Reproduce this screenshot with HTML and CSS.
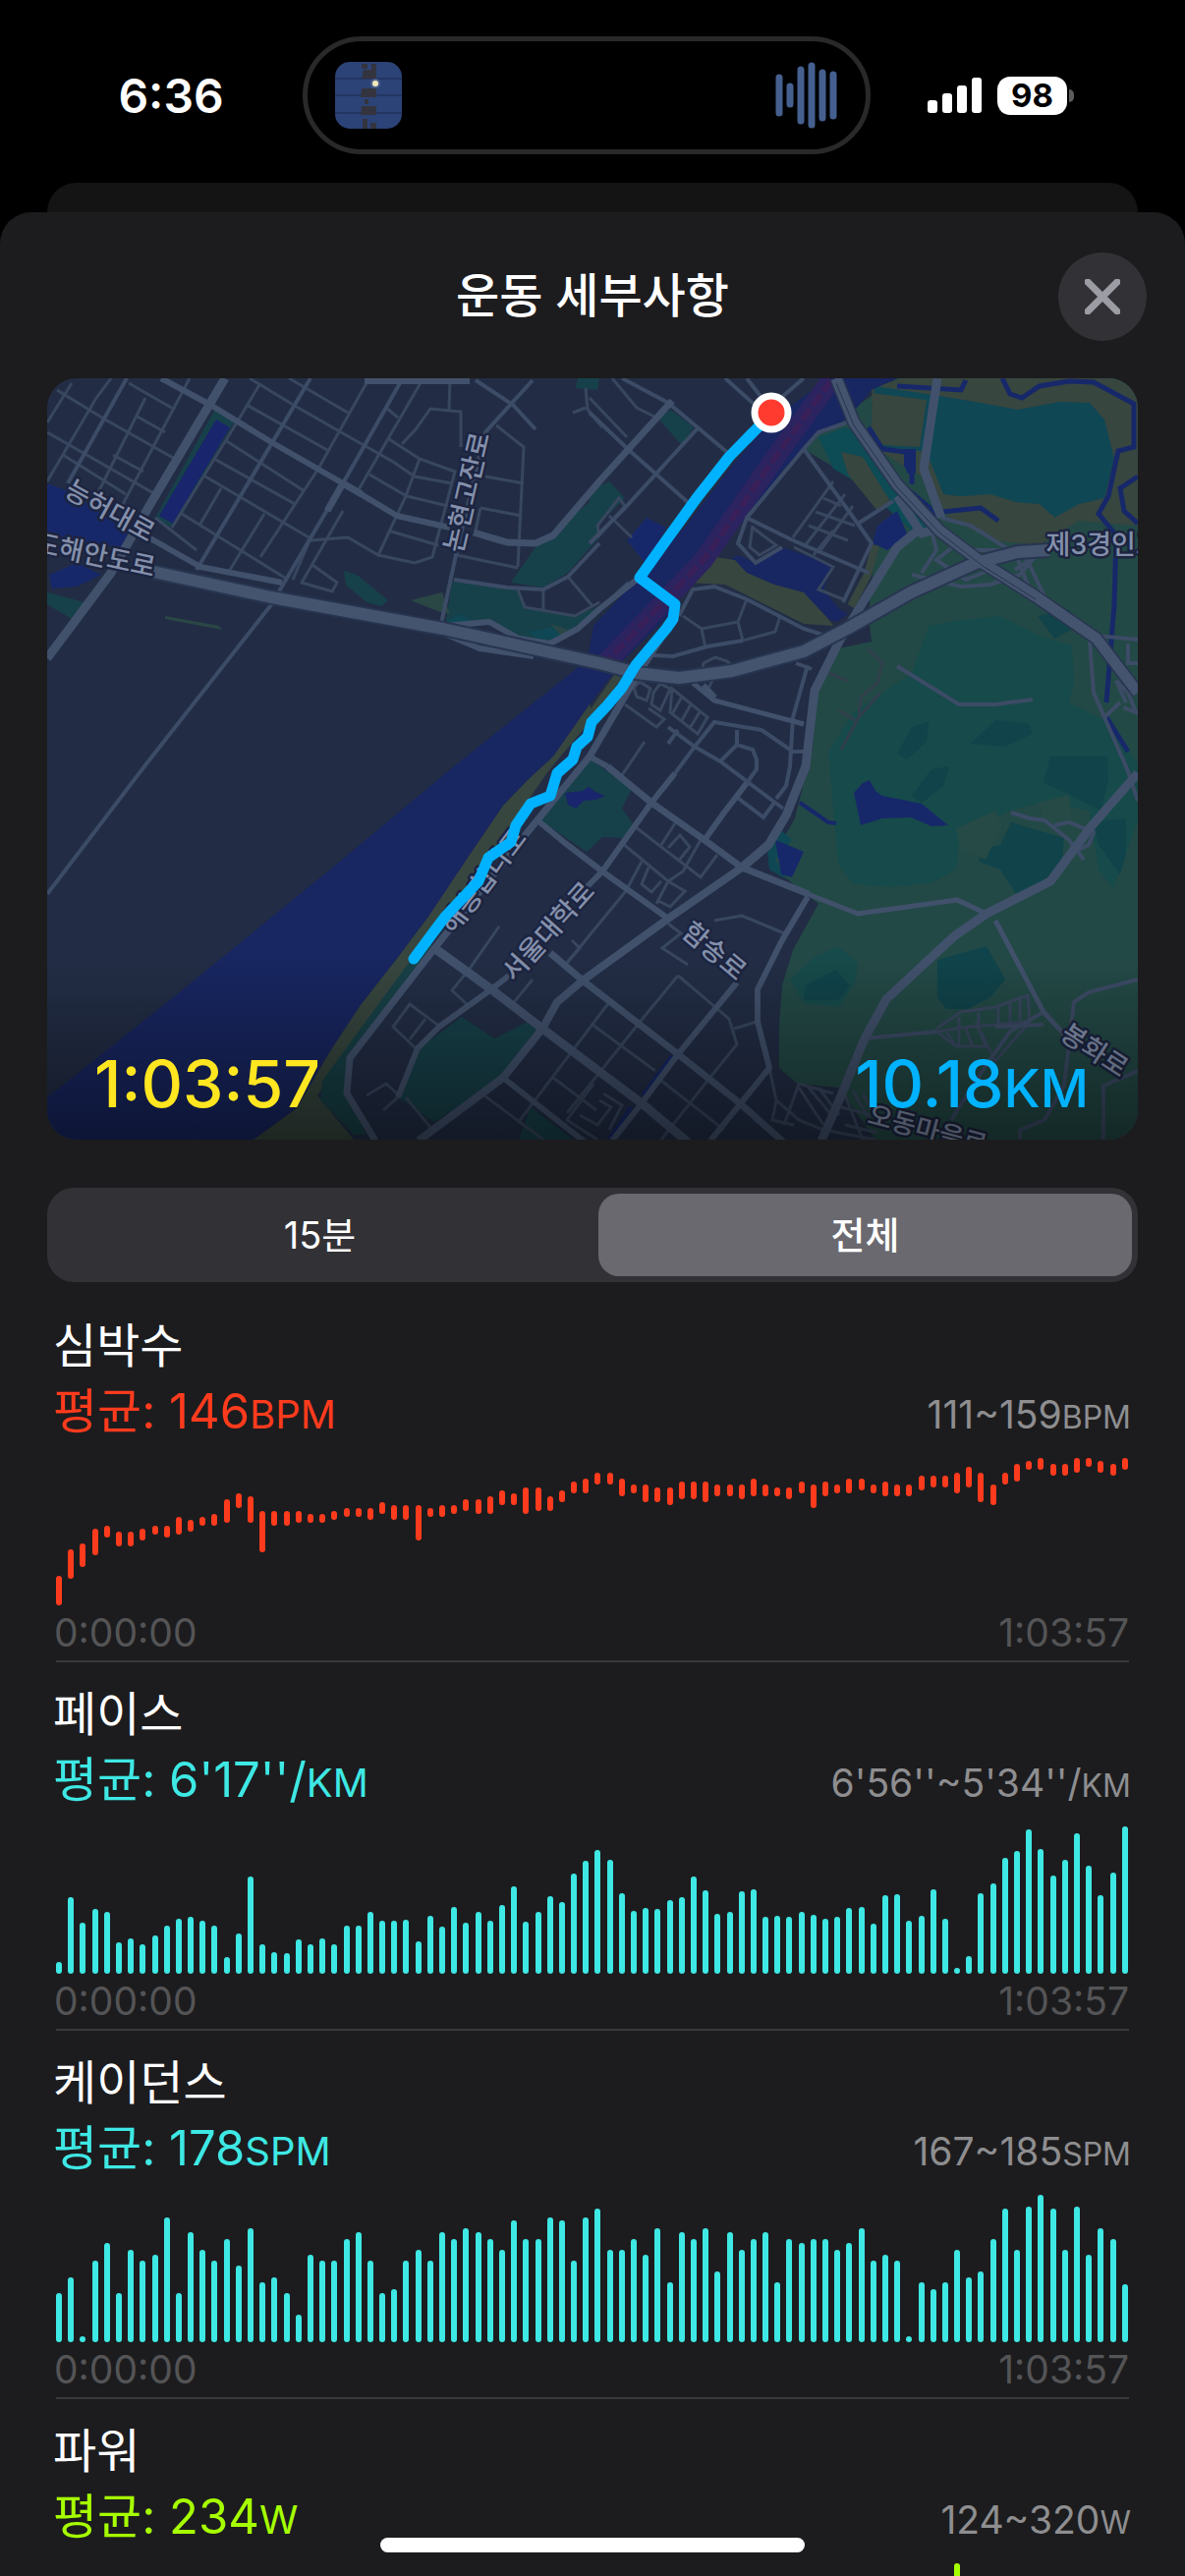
FILE: index.html
```html
<!DOCTYPE html>
<html lang="ko">
<head>
    <meta charset="utf-8">
    <meta name="viewport" content="width=device-width, initial-scale=1.0">
    <title>운동 세부사항</title>
    <link rel="stylesheet" href="styles.css">
</head>
<body>
    <div class="screen">
        <div class="status">
            <span class="status-time">6:36</span>
            <div class="island">
                <svg class="island-art" viewBox="0 0 68 68" width="68" height="68">
                    <rect width="68" height="68" rx="15" fill="#2c4377"/>
                    <path d="M0 17h68M0 34h68M0 52h68" stroke="#233662" stroke-width="2"/>
                    <path d="M27 2h6v5h-6zM37 2h5v6h-5zM29 8h13v9H27zM27 27h15v9H26zM30 38h4v5h-4zM27 45h15v9H26zM28 58h5v10h-5zM36 62h6v6h-6z" fill="#34343f"/>
                    <circle cx="41" cy="22" r="5" fill="#4f5f8a"/>
                    <circle cx="41" cy="22" r="3" fill="#f4e9bd"/>
                </svg>
                <svg class="island-wave" viewBox="0 0 64 68" width="64" height="68">
                    <path d="M4 16v36M15 25v18M26 8v52M37 4v60M48 11v46M59 13v42" stroke="#45608f" stroke-width="7" stroke-linecap="round"/>
                </svg>
            </div>
            <div class="status-icons">
                <svg viewBox="0 0 56 36" width="56" height="36" fill="#fff">
                    <rect x="0" y="23" width="10" height="13" rx="3"/>
                    <rect x="15" y="16" width="10" height="20" rx="3"/>
                    <rect x="30" y="8" width="10" height="28" rx="3"/>
                    <rect x="45" y="0" width="10" height="36" rx="3"/>
                </svg>
                <span class="battery">98</span>
            </div>
        </div>
        <div class="sheet-back"></div>
        <main class="sheet">
            <header class="sheet-head">
                <h1>운동 세부사항</h1>
                <button type="button" class="close" aria-label="닫기">
                    <svg viewBox="0 0 36 36" width="36" height="36">
                        <path d="M3 3l30 30M33 3L3 33" stroke="#9c9ca4" stroke-width="7" stroke-linecap="round"/>
                    </svg>
                </button>
            </header>

            <div class="map">
                <svg class="map-canvas" viewBox="0 0 1110 775">
                    <defs>
                        <linearGradient id="shade" x1="0" y1="0" x2="0" y2="1">
                            <stop offset="0" stop-color="#000" stop-opacity="0"/>
                            <stop offset="1" stop-color="#000" stop-opacity=".45"/>
                        </linearGradient>
                    </defs>
                    <rect width="1110" height="775" fill="#222d45"/>

                    <!-- east side hills -->
                    <path fill="#234946" d="M865 0H1110V775H843L806 722 763 718 745 702 745 658 748 618 759 582 785 535 756 512 734 495 761 448 770 412 779 378 785 315 806 275 839 268 836 240 843 168 870 150 850 120 800 90 770 72 785 55z"/>
                    <path fill="#174a4a" d="M897 252L930 246 970 242 1010 262 1043 272 1045 310 1040 330 1080 350 1110 392V450L1085 520 1070 500 1060 440 1010 432 980 440 960 450 930 460 925 500 900 514 860 518 820 515 805 495 800 440 795 380 820 340 850 320 880 300z"/>
                    <path fill="#174a4a" d="M756 612L780 590 805 578 825 595 822 615 806 640 770 636z"/>
                    <g fill="#10434a">
                        <path d="M981 452L1035 468 1032 498 1012 512 988 528 970 500 948 492 950 480 970 475z"/>
                        <path d="M906 592L956 578 975 612 960 630 937 642 915 642 906 630z"/>
                        <path d="M770 633L772 618 803 602 817 618 806 633z"/>
                        <path d="M1021 385H1079L1080 410 1072 440 1043 425 1014 412z"/>
                        <path d="M865 382L880 355 897 350 895 370 875 388z"/>
                        <path d="M940 372L965 348 1000 352 1002 362 975 375z"/>
                        <path d="M1008 242L1040 235 1044 255 1025 265z"/>
                        <path d="M880 425L900 398 918 395 912 415 890 432z"/>
                        <path d="M1065 452L1098 448 1098 485 1092 505 1070 475z"/>
                    </g>
                    <path fill="#264a46" d="M925 458L965 440 972 455 955 490 930 480zM1008 432L1040 424 1042 448 1020 460z"/>
                    <!-- wetlands -->
                    <path fill="#37463f" d="M839 10L870 0H1110V150L1050 145 1010 170 960 165 912 130 890 100 840 70z"/>
                    <path fill="#0f4755" d="M843 8L908 18 950 25 988 32 1030 24 1061 25 1076 42 1086 82 1076 122 1050 128 1025 142 1010 128 960 124 912 118 895 75 850 70 836 58 840 20z"/>
                    <path fill="#37463f" d="M840 15L895 22 888 70 850 68 838 52z"/>
                    <path fill="#0d4b55" d="M785 60L812 50 835 60 870 120 900 150 880 155 830 110 800 92z"/>
                    <path fill="#37463f" d="M808 75L830 80 858 125 845 135 815 98zM905 122L960 118 1005 132 1025 140 1000 165 950 158 915 140z"/>
                    <path fill="#17286a" d="M845 150L865 135 876 160 855 175 840 168zM872 72h12v25h-8l-4-8zM878 112L900 130 908 148 890 140z"/>
                    <path fill="none" stroke="#17286a" stroke-width="5" d="M865 8L930 12 935 2M972 0L980 16 992 20 1010 8 1040 3 1065 4 1106 26 1106 70 1090 74 1080 120 1070 138 1088 160 1086 230 1078 330M836 50L850 72 880 76M880 80V108M910 136L950 132 968 145M1110 100L1092 112 1096 135 1110 148M1078 345L1100 380"/>
                    <path fill="none" stroke="#313f4c" stroke-width="3" d="M835 275L850 290 845 310 828 325 826 345 848 320M826 345L808 378M795 300L815 308M806 338L825 350"/>

                    <!-- sea and river -->
                    <path fill="#182661" d="M865 0H796L740 40 700 85 650 150 600 205 556 252 550 285 537 297 414 395 294 495 126 632 0 732V775H210L254 743 288 685 319 638 355 592 388 548 428 488 464 435 490 408 515 385 552 332 588 285 639 235 650 208 712 142 750 92 785 55 814 42 839 12z"/>
                    <path fill="#17286a" d="M0 107L21 115 83 155 76 172 0 162zM2 200L30 188 55 200 30 212 5 214zM590 165L610 142 630 152 610 190z"/>
                    <path fill="#182661" d="M660 208L703 180 721 188 748 172 800 190 790 215 806 235 815 240 803 248 760 232 715 205z"/>
                    <path fill="#37463f" d="M650 208L680 182 700 185 712 198 740 210 770 218 795 245 800 252 770 250 720 225 690 210z"/>
                    <path fill="none" stroke="#37463f" stroke-width="8" d="M843 170L835 200 818 232M590 290L552 345"/>
                    <path fill="none" stroke="#2b2460" stroke-width="20" d="M798 2L745 75 668 185 568 290"/>
                    <path fill="none" stroke="#3a2059" stroke-width="6" stroke-dasharray="14 4" d="M798 2L745 75 668 185 568 290"/>
                    <path fill="#37463f" d="M552 332L515 385 490 408 464 435 428 488 388 548 355 592 319 638 288 685 254 743 210 775H312L275 730 370 598 440 500 510 400 556 345z"/>
                    <path fill="#174047" d="M368 595L280 715 278 735 312 770 325 770 304 730 308 692 396 578 385 575z"/>
                    <path fill="#222d45" d="M396 578L450 500 500 440 552 375 600 310 640 320 600 460 500 600 400 775H334L305 728 308 692z"/>

                    <!-- parks -->
                    <g fill="#17414a">
                        <path d="M170 33L190 45 127 152 110 142z"/>
                        <path d="M562 118L537 138 497 172 472 208 505 213 530 198 562 162z"/>
                        <path d="M412 207L479 215 486 233 537 242 562 232 540 255 515 268 479 265 450 250 405 252z"/>
                        <path d="M302 196L315 200 347 226 340 232 325 228 304 210z"/>
                        <path d="M0 218L38 228 25 245 0 230z"/>
                        <path d="M502 450L549 385 595 418 585 438 597 455 585 468 565 467 549 482z"/>
                        <path d="M422 650L455 672 495 652 504 662 464 712 394 757 357 732 377 683z"/>
                        <path d="M621 40L635 32 658 50 646 68zM552 115L572 105 588 122 552 158zM540 0H562L560 12 538 10z"/>
                        <path d="M492 742L535 775H480z"/>
                    </g>
                    <path fill="#0f4755" d="M405 248L420 240 440 252 410 254zM490 258L520 252 525 264 500 266zM732 470L745 458 758 470 741 490 752 510 735 500z"/>
                    <path fill="#2a4745" d="M370 226L402 218 410 240 400 238zM120 242L175 252 178 256 120 245zM512 250L530 256 525 264z"/>
                    <path fill="#19256c" d="M172 42L186 50 128 148 114 140zM527 422L545 420 551 416 558 421 568 425 558 429 546 430 538 438 530 434z"/>
                    <path fill="#17286a" d="M821 422L830 412 837 409 843 420 850 425 890 433 917 455 900 456 879 447 850 448 828 455zM741 470L770 482 758 508 747 505z"/>
                    <path fill="none" stroke="#17286a" stroke-width="4" d="M766 432L795 452 803 453M636 690L606 730M594 742L572 775"/>

                    <!-- side streets -->
                    <g fill="none" stroke="#38475f" stroke-width="3">
                        <path d="M10 12L59 42 130 82M0 55L110 118M83 5L130 32M0 105L50 20 65 0M50 120L100 20M90 38L120 55M67 78L98 95M16 78L80 118M75 132L145 0M0 45L25 5"/>
                        <path d="M203 27L285 73M206 0L252 28 299 55 352 85 374 100 412 107M246 0L306 35M181 63L262 115M170 82L252 128M161 100L268 163 250 205M137 138L245 205M326 3L276 92 217 182M381 3L316 115M217 5L190 50 127 152M177 112L156 148M301 135L259 208 290 217 295 208 270 190M221 138L186 195M110 142L152 175"/>
                        <path d="M268 165L306 162 337 180 374 188 392 182 415 95 379 82 348 62M361 67L375 52 390 31 421 34V70M410 0L409 32M457 48L485 70 479 192M446 100L485 107M441 132L483 140M417 180L479 193M328 98L366 120 408 130M347 155L398 170M379 82L365 120 337 180M441 132L436 155M345 30L357 40"/>
                        <path d="M479 215L486 233 537 242 562 228M505 215V235M530 202L555 232M548 10L550 32 565 50M535 35L548 30"/>
                        <path d="M759 162L800 105M770 172L812 118M785 178L820 130M718 150L715 172 725 180 742 170 718 152M775 150L815 165M782 136L822 150M790 122L808 130M760 172L800 192 785 215 810 225M800 155L780 180M590 60L552 20M575 0L600 30 620 40M560 150L582 122 588 130 562 160zM572 140L595 162"/>
                        <path d="M666 255L703 248 712 225M666 255L670 275M703 248L708 267 741 258 746 242M647 242L666 255M665 305L668 290 680 284 692 288 700 295M690 294L678 305 672 318"/>
                        <path d="M597 315L603 309 614 316 610 328 600 324zM617 320L624 311 634 316 624 338 615 332zM636 316L672 345 662 362 634 340zM646 324L636 342M655 332L645 350M664 340L654 356M588 332L620 355 628 347 612 336"/>
                        <path d="M599 457L665 508 682 485M639 453L625 475M632 478L644 465 654 477 642 492M665 470L647 502 632 512M585 473L632 512 649 522 634 538 622 532M605 492L589 522 529 595M612 498L605 515 615 523 625 512M632 512L620 535M608 370L585 404"/>
                        <path d="M642 608L605 653 529 748M642 608L694 652 702 678 672 715 625 775M699 662L722 655M572 635L479 758M555 658L619 705M515 712L559 745M625 715L689 765M442 728L505 775M679 552L707 547 750 565M460 558L429 602 412 623 430 640M494 612L475 635M369 637L352 660 375 682 400 660zM385 652L369 673M325 730L345 718 358 730M357 732L342 745M365 732L392 765M632 555L645 565 626 580 652 597M534 572L542 580 529 595"/>
                        <path d="M556 718L529 755 560 775M566 728L585 740 572 765M562 735L574 742 560 760 542 750M735 702L742 735 765 755 790 765 843 775M742 735L738 755 760 760"/>
                        <path d="M750 760L765 718 800 728M765 722L790 760M775 722L800 752M785 722L806 750M810 725L830 775M820 725L840 760M830 728L850 765M808 742L840 750M812 760L845 768"/>
                        <path d="M905 662L930 645 965 640 998 628 1000 655 940 660 905 665 925 680 955 680 945 655M928 650V680M948 645V662M968 640V658M980 636V655M990 632V655M915 665L925 680M935 662L942 680M950 665L965 695 1000 655"/>
                    </g>
                    <g fill="none" stroke="#3c4b66" stroke-width="4">
                        <path d="M230 228L99 395 0 525M268 0L152 195M359 5L301 107 243 205 236 217M81 0L21 107M494 2L446 55 417 175 401 250M436 2L474 27 497 52M414 205L468 213 505 215 530 202 562 168"/>
                        <path d="M552 35L592 73 654 128M585 0L632 25 694 77M661 52L588 132 552 168M690 0L740 45M712 0L735 30 770 0M552 245L592 208"/>
                        <path d="M770 72L712 142 703 168 721 188 748 172M770 72L825 148 839 168 810 228M712 142L759 165 836 198M770 72L785 55 814 45M825 148L861 125"/>
                        <path d="M643 242L657 215 679 212 712 225 770 255 792 262M617 282L637 283 672 273 708 267M774 292L759 345 756 395 752 415 742 428M762 290L778 296M756 380L772 380"/>
                        <path d="M639 402L659 375 679 350 727 358 756 378M632 355L659 375 685 390 749 438M702 358V373M685 390L702 373 718 378 722 388 722 398 712 412M700 425L729 447 740 432M632 372L642 358"/>
                        <path d="M865 293L928 332 965 332 1003 327M1061 268L1065 320 1076 345 1100 400 1110 430M1076 345L1092 330M1068 262L1110 266M1098 330L1088 308 1100 320 1108 340 1095 335M1100 270V290L1110 290"/>
                        <path d="M981 442L1000 448 1015 450 1040 470 1055 490M1025 455L1040 452 1065 462 1060 475 1045 482M832 672L905 665M1014 645L980 665 955 700 920 755M1014 658L965 660M1110 612L1060 625 1045 635 1035 720 1015 755 990 765V775M1110 705L1075 720V775"/>
                        <path d="M910 142L940 150 975 172 1005 182 990 200 960 210 930 212 880 200M900 155L905 175 890 198M908 155L940 175 990 175M930 165L905 185 935 205 960 195M985 178L1000 215M995 180L1015 222M1000 185L985 195"/>
                    </g>

                    <!-- main roads -->
                    <g fill="none" stroke="#41516c" stroke-linejoin="round">
                        <path stroke-width="6" d="M116 0L166 27 228 65 301 107 356 140 410 152M105 163L156 192 239 208M323 3H430"/>
                        <path stroke-width="7" d="M434 157L468 167 497 168 515 160 562 105 636 23M301 107L285 135M301 107L320 118"/>
                        <path stroke-width="6" d="M405 252L450 248 480 265 512 270 540 255 562 235 600 205M400 258L440 275 495 283"/>
                        <path stroke-width="7" d="M639 242L599 305 552 385 497 452 396 578 308 692 305 728 334 776"/>
                        <path stroke-width="9" d="M394 580L452 622 504 662 605 738 655 780"/>
                        <path stroke-width="7" d="M570 395L615 432 669 470 707 498 775 525M512 585L545 613 642 688 705 738 750 778"/>
                        <path stroke-width="6" d="M552 385L570 395M499 450L527 473 565 502 632 550M639 402L615 432 565 502 549 518M669 470L689 442 712 412M464 712L548 778M470 608L452 622 399 660 377 682 357 732"/>
                        <path stroke-width="5" d="M774 525L825 545 926 531 956 545M965 552L1014 645 1039 672M657 310L679 328 770 352M668 312L680 325"/>
                        <path stroke-width="6" d="M774 528L748 572 723 622 723 655 735 702 675 776M702 615L642 688 605 738 575 776"/>
                        <path stroke-width="9" d="M181 0L105 128 65 198 0 285"/>
                        <path stroke-width="9" d="M886 155L865 172 832 225 806 268 781 318 772 395 752 445 734 475 707 498"/>
                        <path stroke-width="8" d="M707 498L632 550 545 613 519 635 504 662 464 712 378 776"/>
                        <path stroke-width="9" d="M1110 402L1061 458 1021 512 956 545 923 568 854 632 832 672 806 735 788 776M906 0L892 92 910 142M865 120L890 158 908 152"/>
                    </g>
                    <g fill="none" stroke="#283550">
                        <path stroke-width="16" d="M108 197L228 223 403 255 562 290 600 300 643 305 697 298 770 278 814 255 879 218 945 188 988 177 1020 175"/>
                        <path stroke-width="14" d="M803 0L821 45 865 108 908 155 952 188 1006 222 1068 265 1110 320"/>
                    </g>
                    <g fill="none" stroke="#44536e" stroke-linejoin="round">
                        <path stroke-width="12" d="M108 197L228 223 403 255 562 290 600 300 643 305 697 298 770 278 814 255 879 218 945 188 988 177 1020 175"/>
                        <path stroke-width="11" d="M803 0L821 45 865 108 908 155 952 188 1006 222 1068 265 1110 320"/>
                    </g>
                    <path fill="none" stroke="#28344f" stroke-width="1" d="M803 5L821 48 865 111 908 157 952 191 1006 225"/>

                    <g class="map-label">
                        <text transform="translate(64 135) rotate(29)">능허대로</text>
                        <text transform="translate(49 180) rotate(12)">도해안도로</text>
                        <text transform="translate(427 116) rotate(-77)">논현고잔로</text>
                        <text transform="translate(1087 169)">제3경인고속</text>
                        <text transform="translate(444 512) rotate(-53)">해송합다로</text>
                        <text transform="translate(510 563) rotate(-48)">서울대학로</text>
                        <text transform="translate(679 583) rotate(40)">함송로</text>
                        <text transform="translate(1066 684) rotate(33)">봉화로</text>
                        <text transform="translate(896 765) rotate(15)">오동마을로</text>
                    </g>

                    <rect y="590" width="1110" height="185" fill="url(#shade)"/>
                    <path fill="none" stroke="#00b2ff" stroke-width="11" stroke-linejoin="round" stroke-linecap="round" d="M737 36L694 80 661 122 630 165 603 203 639 230 637 245 630 255 599 292 585 315 570 333 554 350 550 365 539 375 535 388 519 402 512 425 492 433 477 455 472 472 449 488 439 512 405 548 390 568 373 591"/>
                    <circle cx="737" cy="35" r="17" fill="#ff3b30" stroke="#fff" stroke-width="7"/>
                </svg>
                <div class="map-stats">
                    <span class="total-time">1:03:57</span>
                    <span class="total-distance">10.18<small>KM</small></span>
                </div>
            </div>

            <div class="segment">
                <input type="radio" name="range" id="range-15">
                <label for="range-15">15분</label>
                <input type="radio" name="range" id="range-all" checked>
                <label for="range-all">전체</label>
            </div>

            <section class="metric heart">
                <h2>심박수</h2>
                <div class="metric-row">
                    <span class="average">평균: 146<small>BPM</small></span>
                    <span class="minmax">111~159<small>BPM</small></span>
                </div>
                <div class="chart" id="heartChart"></div>
                <div class="times"><span>0:00:00</span><span>1:03:57</span></div>
            </section>

            <section class="metric pace">
                <h2>페이스</h2>
                <div class="metric-row">
                    <span class="average">평균: 6'17''/<small>KM</small></span>
                    <span class="minmax">6'56''~5'34''/<small>KM</small></span>
                </div>
                <div class="chart" id="paceChart"></div>
                <div class="times"><span>0:00:00</span><span>1:03:57</span></div>
            </section>

            <section class="metric cadence">
                <h2>케이던스</h2>
                <div class="metric-row">
                    <span class="average">평균: 178<small>SPM</small></span>
                    <span class="minmax">167~185<small>SPM</small></span>
                </div>
                <div class="chart" id="cadenceChart"></div>
                <div class="times"><span>0:00:00</span><span>1:03:57</span></div>
            </section>

            <section class="metric power">
                <h2>파워</h2>
                <div class="metric-row">
                    <span class="average">평균: 234<small>W</small></span>
                    <span class="minmax">124~320<small>W</small></span>
                </div>
                <div class="chart" id="powerChart"></div>
            </section>
        </main>
        <div class="home-bar"></div>
    </div>
    <script src="charts.js"></script>
</body>
</html>
```
FILE: styles.css
```css
* {
    box-sizing: border-box;
    margin: 0;
    padding: 0;
}

body {
    background: #000;
    color: #fff;
    font-family: Inter, "Noto Sans CJK KR", sans-serif;
}

.screen {
    display: flex;
    flex-direction: column;
    height: 100vh;
    overflow: hidden;
}

/* status bar */
.status {
    flex: none;
    display: grid;
    grid-template-columns: 308px 1fr 320px;
    align-items: center;
    height: 186px;
    padding-top: 8px;
}

.status-time {
    padding-left: 40px;
    text-align: center;
    font-size: 48px;
    font-weight: 600;
}

.island {
    display: flex;
    align-items: center;
    justify-content: space-between;
    height: 120px;
    padding: 0 28px;
    border: 5px solid #292929;
    border-radius: 60px;
}

.status-icons {
    display: flex;
    align-items: center;
    gap: 15px;
    padding-left: 58px;
}

.battery {
    position: relative;
    width: 71px;
    height: 39px;
    border-radius: 13px;
    background: #fff;
    color: #000;
    text-align: center;
    font-size: 33px;
    line-height: 39px;
    font-weight: 700;
}

.battery::after {
    content: "";
    position: absolute;
    top: 13px;
    right: -7px;
    width: 5px;
    height: 13px;
    border-radius: 0 5px 5px 0;
    background: #5c5c5c;
}

/* sheet */
.sheet-back {
    flex: none;
    height: 30px;
    margin: 0 48px;
    border-radius: 30px 30px 0 0;
    background: #141414;
}

.sheet {
    flex: 1;
    min-height: 0;
    overflow: hidden;
    padding: 0 48px;
    border-radius: 32px 32px 0 0;
    background: #1c1c1e;
}

.sheet-head {
    position: relative;
    height: 169px;
    line-height: 169px;
    text-align: center;
}

.sheet-head h1 {
    font-size: 48px;
    font-weight: 500;
}

.close {
    position: absolute;
    top: 41px;
    right: -9px;
    display: flex;
    align-items: center;
    justify-content: center;
    width: 90px;
    height: 90px;
    border: none;
    border-radius: 50%;
    background: #323236;
}

/* map */
.map {
    position: relative;
    overflow: hidden;
    border-radius: 30px;
}

.map-canvas {
    display: block;
    width: 100%;
}

.map-label {
    fill: #8490ab;
    stroke: #1c2440;
    stroke-width: 5px;
    stroke-linejoin: round;
    paint-order: stroke;
    font-size: 27px;
    font-weight: 500;
    text-anchor: middle;
    dominant-baseline: central;
}

.map-stats {
    position: absolute;
    right: 0;
    bottom: 0;
    left: 0;
    display: flex;
    justify-content: space-between;
    padding: 0 50px 12px 48px;
    font-size: 66px;
    line-height: 80px;
    font-weight: 500;
}

.map-stats small {
    font-size: 54px;
}

.total-time {
    color: #ffe620;
}

.total-distance {
    color: #00b2ff;
}

/* 15분 / 전체 */
.segment {
    display: flex;
    gap: 12px;
    height: 96px;
    margin: 49px 0 12px;
    padding: 6px;
    border-radius: 27px;
    background: #323236;
}

.segment input {
    position: absolute;
    opacity: 0;
}

.segment label {
    flex: 1;
    border-radius: 21px;
    text-align: center;
    font-size: 38px;
    line-height: 84px;
    font-weight: 400;
}

.segment input:checked + label {
    background: #6a696f;
    font-weight: 500;
}

/* metrics */
.metric {
    margin: 0 9px;
    padding-top: 19px;
    border-bottom: 2px solid #3a3a3c;
}

.metric h2 {
    margin-left: -3px;
    font-size: 48px;
    line-height: 68px;
    font-weight: 400;
}

.metric-row {
    display: flex;
    align-items: baseline;
    justify-content: space-between;
    height: 64px;
    margin: 0 -2px 16px -3px;
    line-height: 66px;
}

.average {
    font-size: 49px;
}

.average small {
    font-size: 40px;
}

.minmax {
    color: #8e8e90;
    font-size: 39px;
}

.minmax small {
    font-size: 32px;
}

.chart {
    display: flex;
    align-items: flex-end;
    justify-content: space-between;
    height: 150px;
}

.bar {
    width: 6px;
    min-height: 6px;
    border-radius: 3px;
    background: currentColor;
}

.times {
    display: flex;
    justify-content: space-between;
    margin-left: -2px;
    color: #545456;
    font-size: 39px;
    line-height: 56px;
}

.heart .average, .heart .chart {
    color: #ff3b1d;
}

.pace .average, .pace .chart,
.cadence .average, .cadence .chart {
    color: #3ee8e4;
}

.power .average, .power .chart {
    color: #a6ff00;
}

.home-bar {
    position: fixed;
    bottom: 24px;
    left: 50%;
    width: 432px;
    height: 15px;
    margin-left: -216px;
    border-radius: 8px;
    background: #fff;
}
```
FILE: charts.js
```js
// [low, high] BPM
var heart = [
    [111,119],[120,128],[124,130],[128,135],[134,136],[131,134],[131,134],[133,135],[135,136],[134,136],
    [135,139],[136,138],[138,139],[138,140],[139,145],[144,147],[139,146],[129,141],[138,141],[138,141],
    [139,141],[139,140],[139,140],[140,141],[141,142],[141,142],[140,142],[142,144],[140,143],[140,143],
    [133,143],[141,142],[141,143],[142,143],[143,145],[142,145],[142,146],[145,148],[145,147],[142,149],
    [143,149],[143,146],[146,148],[149,151],[149,152],[152,154],[152,154],[148,152],[149,150],[146,150],
    [146,149],[145,149],[147,151],[147,151],[146,151],[148,150],[148,150],[147,150],[148,152],[148,150],
    [148,149],[147,149],[149,151],[144,150],[148,151],[149,150],[149,152],[150,152],[149,150],[148,151],
    [148,150],[148,150],[150,153],[151,153],[151,153],[149,154],[151,156],[146,154],[145,150],[152,154],
    [153,157],[157,158],[157,159],[155,157],[155,157],[156,159],[158,159],[156,158],[155,157],[157,159]
];

var pace = [
    12,78,52,66,63,32,36,30,39,49,56,58,54,49,17,41,99,30,22,21,35,30,36,30,49,49,63,54,54,55,
    33,59,48,68,52,63,54,70,89,53,63,79,73,102,115,126,116,82,64,67,66,75,78,99,85,61,63,84,86,58,
    59,58,63,60,56,58,67,68,51,80,81,54,59,86,56,6,18,82,92,118,125,147,127,100,116,143,110,80,103,150
];

var cadence = [
    50,66,6,83,101,50,94,83,89,127,50,112,94,83,105,78,116,61,66,50,28,89,83,83,105,112,83,50,54,83,
    94,83,112,105,116,112,105,94,124,105,105,127,124,83,127,136,94,94,105,89,116,61,112,105,116,72,112,94,105,112,
    61,105,101,105,105,94,101,116,83,89,83,6,61,54,61,94,66,72,105,136,94,138,150,136,94,138,89,116,105,59
];

var power = [];
for (var i = 0; i < 90; i++) {
    power.push(i == 75 ? 150 : 6);
}

function addBar(chart, height, bottom) {
    var bar = document.createElement("span");
    bar.className = "bar";
    bar.style.height = height + "px";
    if (bottom) {
        bar.style.marginBottom = bottom + "px";
    }
    chart.appendChild(bar);
}

function drawBars(id, values) {
    var chart = document.getElementById(id);
    values.forEach(function (v) {
        addBar(chart, v, 0);
    });
}

var heartChart = document.getElementById("heartChart");
heart.forEach(function (v) {
    addBar(heartChart, (v[1] - v[0]) * 3 + 6, (v[0] - 111) * 3);
});

drawBars("paceChart", pace);
drawBars("cadenceChart", cadence);
drawBars("powerChart", power);
```
